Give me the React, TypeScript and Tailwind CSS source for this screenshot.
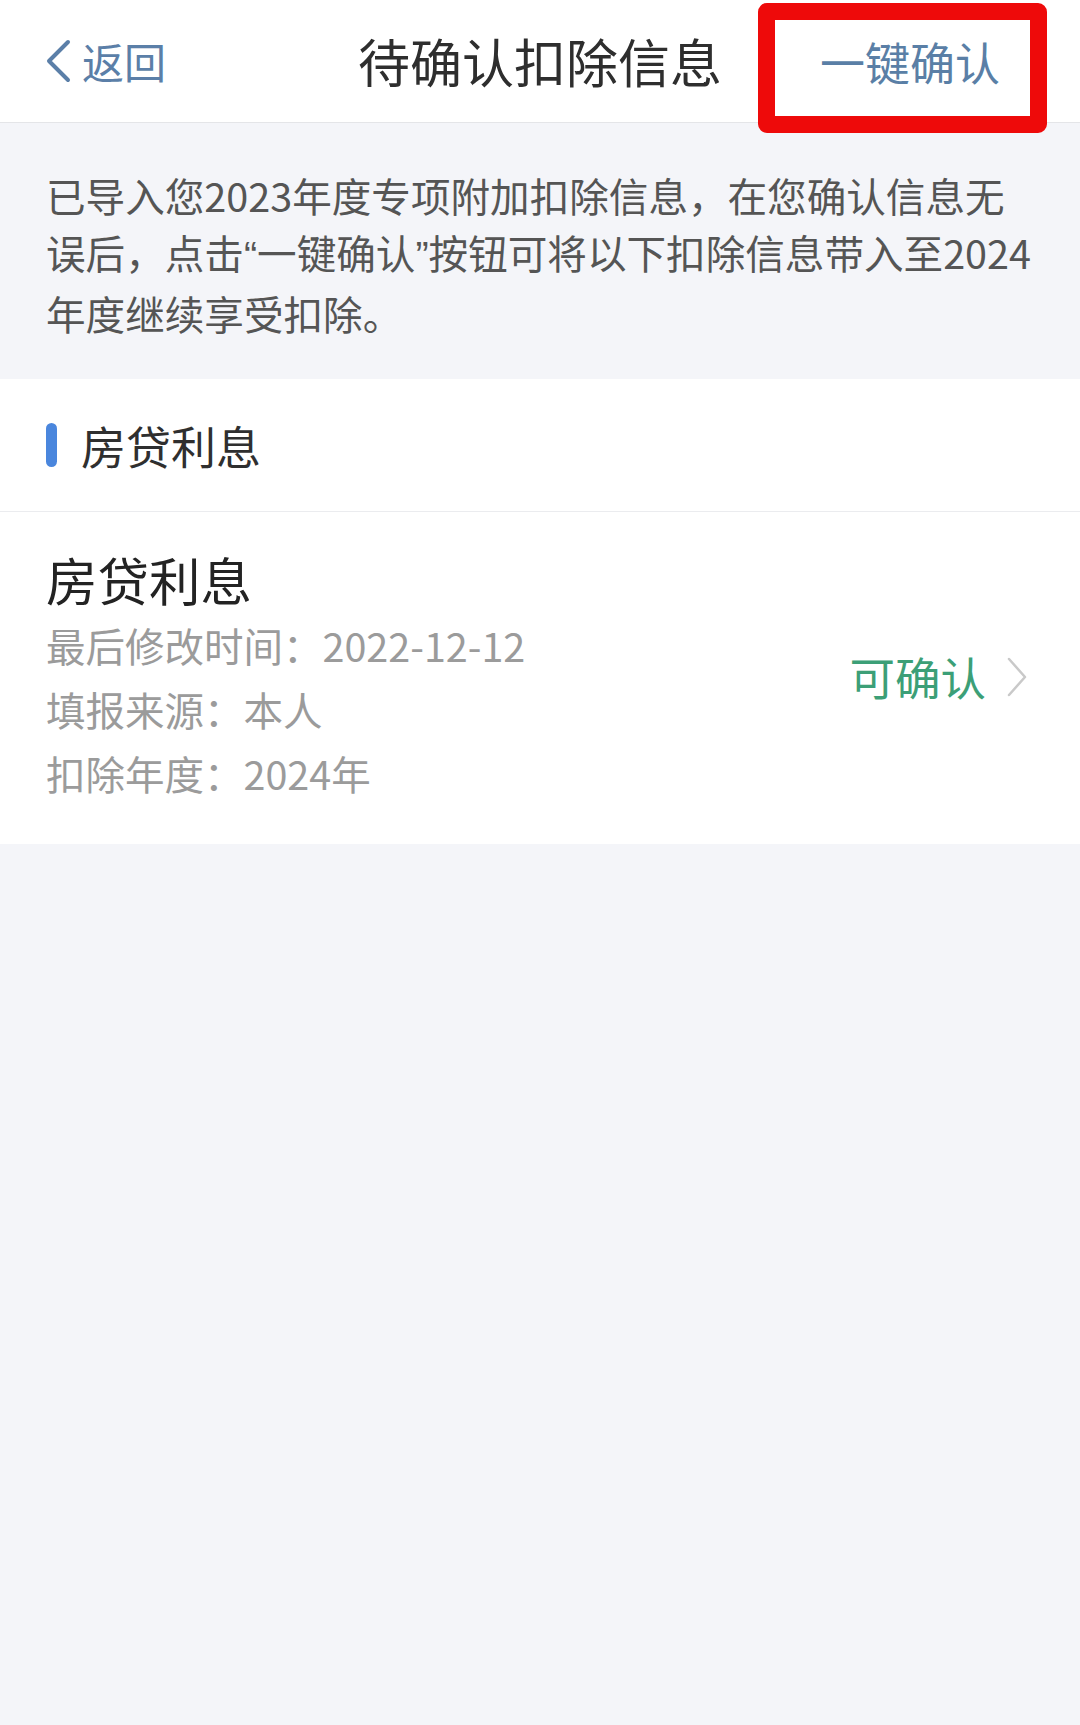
import React from "react";

const font = { fontFamily: '"Noto Sans CJK SC", "Noto Sans", sans-serif' };

export default function App() {
  return (
    <div
      className="min-h-[1725px] w-[1080px] bg-[#f4f5f9] [font-family:'Noto_Sans_CJK_SC','Noto_Sans',sans-serif]"
      style={font}
    >
      {/* Header */}
      <div className="relative grid h-[123px] grid-cols-[1fr_auto_1fr] items-center border-b border-[#e4e5e8] bg-white">
        <div className="flex items-center pl-[44px]">
          <svg width="28" height="44" viewBox="0 0 28 44" className="mr-[10px]">
            <path d="M24 3 L5 22 L24 41" fill="none" stroke="#5b7fa8" strokeWidth="4" strokeLinecap="round" strokeLinejoin="round" />
          </svg>
          <span className="text-[42px] leading-none text-[#5b7fa8]">返回</span>
        </div>
        <div className="text-[52px] leading-none text-[#2e2e2e]">待确认扣除信息</div>
        <div className="flex justify-end pr-[80px]">
          <span className="text-[45px] leading-none text-[#5a7fa6]">一键确认</span>
        </div>
        <div className="pointer-events-none absolute left-[758px] top-[3px] h-[130px] w-[289px] rounded-[9px] border-[17px] border-[#ee0a0a]" />
      </div>

      {/* Intro */}
      <div className="px-[46px] pb-[38px] pt-[43px] text-[39.6px] leading-[57px] text-[#555555]">
        <div className="whitespace-nowrap">已导入您2023年度专项附加扣除信息，在您确认信息无</div>
        <div className="whitespace-nowrap">
          误后，点击<span className="[font-family:'Liberation_Sans',sans-serif]">“</span>一键确认<span className="[font-family:'Liberation_Sans',sans-serif]">”</span>按钮可将以下扣除信息带入至2024
        </div>
        <div className="whitespace-nowrap">年度继续享受扣除。</div>
      </div>

      {/* Section header */}
      <div className="flex h-[133px] items-center border-b border-[#ebecef] bg-white pl-[46px]">
        <div className="mr-[24px] h-[44px] w-[11px] rounded-full bg-[#4a86dd]" />
        <span className="text-[45px] leading-none text-[#2f2f2f]">房贷利息</span>
      </div>

      {/* Card */}
      <div className="flex items-center bg-white pb-[39px] pl-[46px] pr-[52px] pt-[37px]">
        <div className="flex flex-1 flex-col">
          <div className="text-[51.5px] leading-[60px] text-[#232323]">房贷利息</div>
          <div className="mt-[4px] text-[39.5px] leading-[64px] text-[#9b9b9b]">
            <div>最后修改时间：2022-12-12</div>
            <div>填报来源：本人</div>
            <div>扣除年度：2024年</div>
          </div>
        </div>
        <div className="flex items-center">
          <span className="text-[45.5px] leading-none text-[#3c9f77]">可确认</span>
          <svg width="22" height="42" viewBox="0 0 22 42" className="ml-[20px]">
            <path d="M3 3 L19 21 L3 39" fill="none" stroke="#c9c9c9" strokeWidth="2.5" strokeLinecap="round" strokeLinejoin="round" />
          </svg>
        </div>
      </div>
    </div>
  );
}
